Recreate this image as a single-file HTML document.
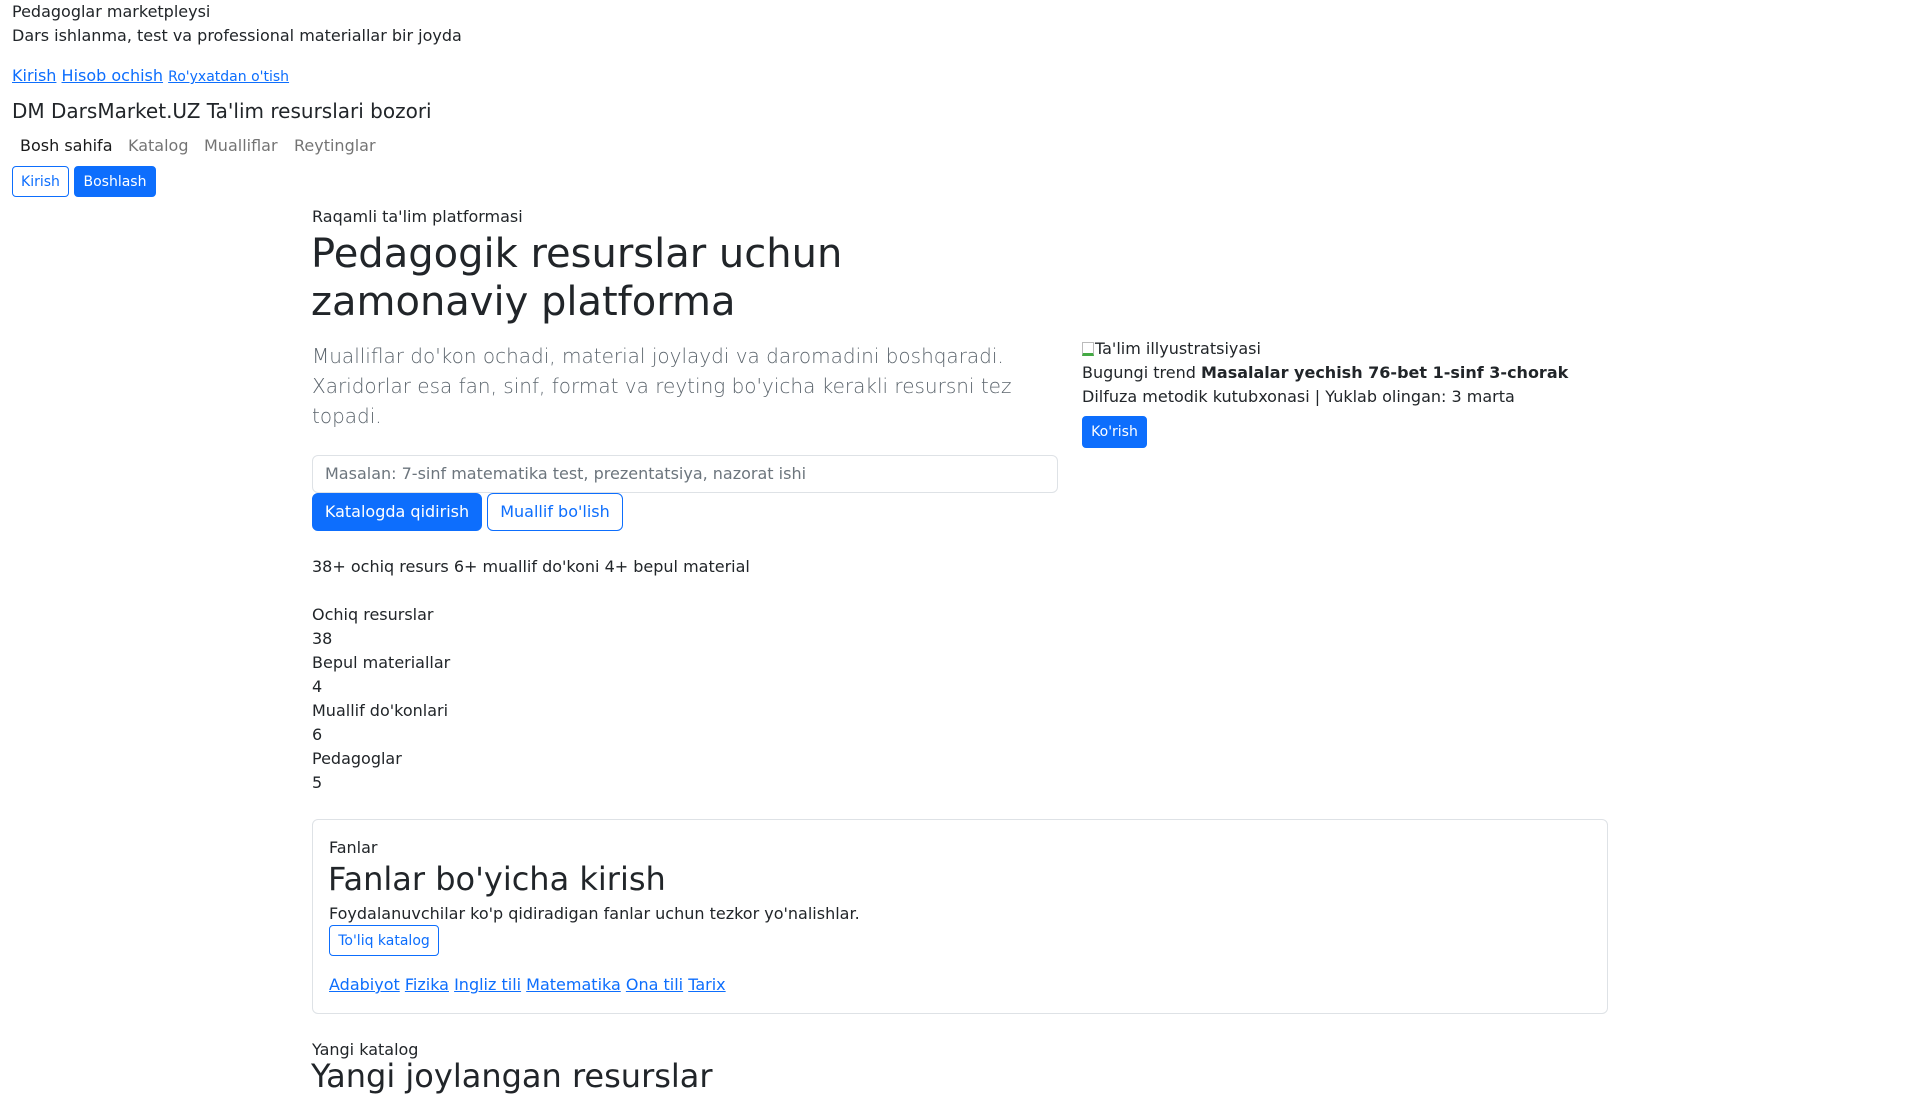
<!DOCTYPE html>
<html><head><meta charset="utf-8"><style>
*{box-sizing:border-box;margin:0;padding:0}
body{width:1920px;height:1080px;overflow:hidden;background:#fff;color:#212529;font-family:"DejaVu Sans","Liberation Sans",sans-serif;font-size:16px;line-height:24px;position:relative}
#w{position:absolute;left:0;top:1px;width:1920px;height:1080px}
.a{position:absolute;white-space:nowrap}
a{color:#0d6efd;text-decoration:underline}
.btn{position:absolute;border:1px solid #0d6efd;border-radius:6px;display:flex;align-items:center;justify-content:center;font-size:16px}
.p{background:#0d6efd;color:#fff}
.o{background:#fff;color:#0d6efd}
.sm{font-size:14px;border-radius:4px}
.nav{color:rgba(0,0,0,.55)}
</style></head><body><div id="w">
<div class="a" style="left:12px;top:-1px">Pedagoglar marketpleysi</div>
<div class="a" style="left:12px;top:23px">Dars ishlanma, test va professional materiallar bir joyda</div>
<div class="a" style="left:12px;top:63px"><a>Kirish</a> <a>Hisob ochish</a> <a style="font-size:14px">Ro'yxatdan o'tish</a></div>
<div class="a" style="left:12px;top:95px;font-size:20px;line-height:30px">DM DarsMarket.UZ Ta'lim resurslari bozori</div>
<div class="a" style="left:20px;top:133px;color:rgba(0,0,0,.9)">Bosh sahifa</div>
<div class="a nav" style="left:128px;top:133px">Katalog</div>
<div class="a nav" style="left:204px;top:133px">Mualliflar</div>
<div class="a nav" style="left:294px;top:133px">Reytinglar</div>
<div class="btn o sm" style="left:12px;top:165px;width:57px;height:31px">Kirish</div>
<div class="btn p sm" style="left:74px;top:165px;width:82px;height:31px">Boshlash</div>

<div class="a" style="left:312px;top:204px">Raqamli ta'lim platformasi</div>
<div class="a" style="left:311px;top:229px;font-size:40px;line-height:48px;font-weight:500">Pedagogik resurslar uchun<br>zamonaviy platforma</div>
<div class="a" style="left:312px;top:340px;font-size:20px;line-height:30px;font-weight:300;color:#5c656d;white-space:normal;width:746px">Mualliflar do'kon ochadi, material joylaydi va daromadini boshqaradi. Xaridorlar esa fan, sinf, format va reyting bo'yicha kerakli resursni tez topadi.</div>
<div class="a" style="left:312px;top:454px;width:746px;height:38px;border:1px solid #dee2e6;border-radius:6px;padding:6px 12px;color:#6c757d">Masalan: 7-sinf matematika test, prezentatsiya, nazorat ishi</div>
<div class="btn p" style="left:312px;top:492px;width:170px;height:38px">Katalogda qidirish</div>
<div class="btn o" style="left:487px;top:492px;width:136px;height:38px">Muallif bo'lish</div>
<div class="a" style="left:312px;top:554px">38+ ochiq resurs 6+ muallif do'koni 4+ bepul material</div>
<div class="a" style="left:312px;top:602px;line-height:24px">Ochiq resurslar<br>38<br>Bepul materiallar<br>4<br>Muallif do'konlari<br>6<br>Pedagoglar<br>5</div>

<div class="a" style="left:1082px;top:336px"><span style="display:inline-block;width:12px;height:14px;border:1px solid #bbb;border-bottom:3px solid #4a4;vertical-align:-2px;margin-right:1px"></span>Ta'lim illyustratsiyasi</div>
<div class="a" style="left:1082px;top:360px">Bugungi trend <b>Masalalar yechish 76-bet 1-sinf 3-chorak</b></div>
<div class="a" style="left:1082px;top:384px">Dilfuza metodik kutubxonasi | Yuklab olingan: 3 marta</div>
<div class="btn p sm" style="left:1082px;top:415px;width:65px;height:32px">Ko'rish</div>

<div class="a" style="left:312px;top:818px;width:1296px;height:195px;border:1px solid #dee2e6;border-radius:6px"></div>
<div class="a" style="left:329px;top:835px">Fanlar</div>
<div class="a" style="left:328px;top:858px;font-size:32px;line-height:40px;font-weight:500">Fanlar bo'yicha kirish</div>
<div class="a" style="left:329px;top:901px">Foydalanuvchilar ko'p qidiradigan fanlar uchun tezkor yo'nalishlar.</div>
<div class="btn o sm" style="left:329px;top:924px;width:110px;height:31px">To'liq katalog</div>
<div class="a" style="left:329px;top:972px"><a>Adabiyot</a> <a>Fizika</a> <a>Ingliz tili</a> <a>Matematika</a> <a>Ona tili</a> <a>Tarix</a></div>
<div class="a" style="left:312px;top:1037px">Yangi katalog</div>
<div class="a" style="left:311px;top:1055px;font-size:32px;line-height:40px;font-weight:500">Yangi joylangan resurslar</div>
</div></body></html>
